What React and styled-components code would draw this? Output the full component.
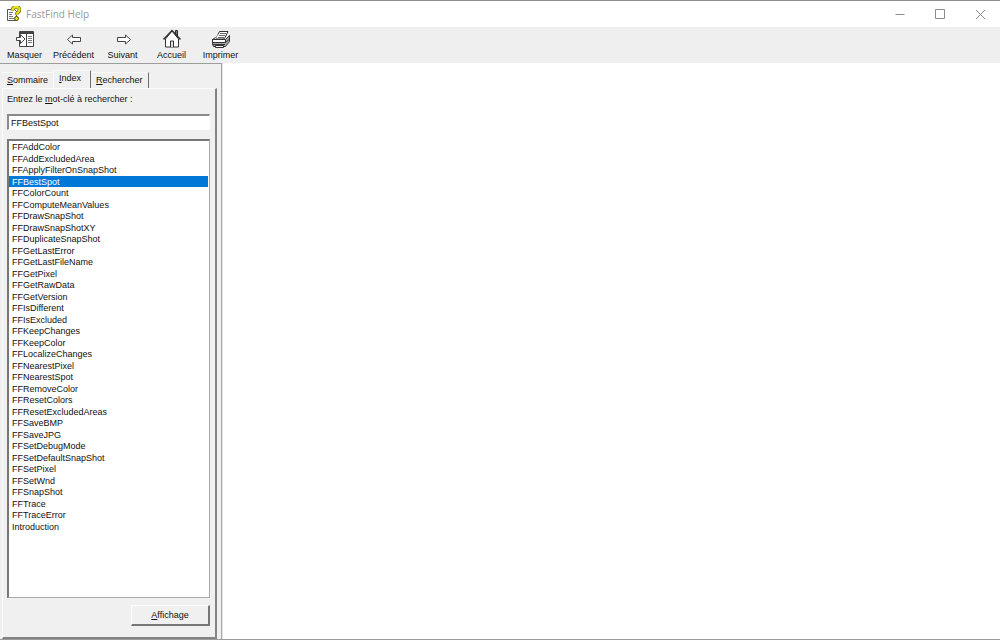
import React, { useState } from "react";
import styled, { createGlobalStyle, css } from "styled-components";

const GlobalStyle = createGlobalStyle`
  *, *::before, *::after { box-sizing: border-box; }
  body { margin: 0; background: #fff; }
  button, input { font: inherit; color: inherit; }
`;

const Window = styled.div`
  display: flex;
  flex-direction: column;
  height: 100vh;
  border-top: 1px solid #8f8f8f;
  border-bottom: 1px solid #9b9b9b;
  background: #fff;
  color: #111;
  font: 9px/12px "Liberation Sans", Arial, sans-serif;
`;

const TitleBar = styled.header`
  display: flex;
  align-items: center;
  height: 26px;
  padding-left: 6px;
`;

const Title = styled.h1`
  flex: 1;
  margin: 0 0 0 5px;
  color: #999;
  font: 400 10px/14px "Open Sans", "Noto Sans", sans-serif;
`;

const WindowButton = styled.button`
  display: grid;
  place-items: center;
  width: 40px;
  height: 26px;
  padding: 0;
  border: 0;
  background: none;
  color: #8c8c8c;
`;

const Toolbar = styled.nav`
  display: flex;
  height: 36px;
  background: #efefef;
`;

const ToolButton = styled.button`
  display: flex;
  flex-direction: column;
  align-items: center;
  gap: 1px;
  width: 49px;
  height: 36px;
  padding: 2px 0 0;
  border: 0;
  background: none;
  white-space: nowrap;
`;

const Body = styled.div`
  display: flex;
  flex: 1;
  min-height: 0;
`;

const Sidebar = styled.aside`
  display: flex;
  flex-direction: column;
  width: 222px;
  padding: 6px 4px 0 2px;
  border-top: 1px solid #9d9d9d;
  border-right: 1px solid #a5a5a5;
  background: #f0f0f0;
`;

const Content = styled.main`
  flex: 1;
  border-left: 1px solid #e6e6e6;
  background: #fff;
`;

const Tabs = styled.div`
  display: flex;
  align-items: flex-end;
  height: 18px;
`;

const Tab = styled.button`
  height: 16px;
  padding: 0 5px;
  border: 0;
  border-top: 1px solid #fafafa;
  background: none;
  line-height: 15px;
  white-space: nowrap;
  ${(p) => p.$edge && css`border-right: 1px solid #6f6f6f;`}
  ${(p) =>
    p.$active &&
    css`
      height: 18px;
      padding: 0 9px 2px 5px;
      border-right: 1px solid #6f6f6f;
      border-left: 1px solid #fafafa;
    `}
`;

const Panel = styled.section`
  display: flex;
  flex: 1;
  flex-direction: column;
  min-height: 0;
  padding: 4px 5px 11px 4px;
  border: 1px solid #fbfbfb;
  border-right: 2px solid #848484;
  border-bottom: 2px solid #848484;
`;

const Label = styled.label`
  margin-bottom: 9px;
  white-space: nowrap;
`;

const Keyword = styled.input`
  width: 100%;
  height: 16px;
  margin-bottom: 9px;
  padding: 0 2px;
  border: 1px solid #fff;
  border-top: 2px solid #8a8a8a;
  border-left: 2px solid #8a8a8a;
  border-radius: 0;
  outline: 0;
  background: #fff;
`;

const ListBox = styled.div`
  flex: 1;
  min-height: 0;
  margin-bottom: 7px;
  overflow: hidden;
  border: 1px solid #aaa;
  border-top: 2px solid #777;
  border-left: 2px solid #777;
  background: #fff;
`;

const Topics = styled.ul`
  display: grid;
  grid-template-rows: repeat(34, 1fr);
  height: 391px;
  margin: 0;
  padding: 0 1px 0 0;
  list-style: none;
`;

const Topic = styled.li`
  min-height: 0;
  padding: 1px 0 0 3px;
  line-height: 11px;
  white-space: nowrap;
  cursor: default;
  ${(p) => p.$selected && css`background: #0078d7; color: #fff;`}
`;

const ShowButton = styled.button`
  align-self: flex-end;
  width: 79px;
  height: 21px;
  padding: 0;
  border: 1px solid #fff;
  border-right: 2px solid #777;
  border-bottom: 2px solid #777;
  background: #f0f0f0;
`;

const topics = [
  "FFAddColor", "FFAddExcludedArea", "FFApplyFilterOnSnapShot", "FFBestSpot",
  "FFColorCount", "FFComputeMeanValues", "FFDrawSnapShot", "FFDrawSnapShotXY",
  "FFDuplicateSnapShot", "FFGetLastError", "FFGetLastFileName", "FFGetPixel",
  "FFGetRawData", "FFGetVersion", "FFIsDifferent", "FFIsExcluded",
  "FFKeepChanges", "FFKeepColor", "FFLocalizeChanges", "FFNearestPixel",
  "FFNearestSpot", "FFRemoveColor", "FFResetColors", "FFResetExcludedAreas",
  "FFSaveBMP", "FFSaveJPG", "FFSetDebugMode", "FFSetDefaultSnapShot",
  "FFSetPixel", "FFSetWnd", "FFSnapShot", "FFTrace", "FFTraceError",
  "Introduction",
];

const HelpLogo = () => (
  <svg width="15" height="16" viewBox="0 0 15 16" aria-hidden="true">
    <path d="M1.5 3.5h7l2 2v9h-9z" fill="#fff" stroke="#555" />
    <path d="M3 6.5h4M3 8.5h3M3 10.5h4M3 12.5h5" stroke="#777" />
    <path d="M6.5 4.5c0-4.500 7-4.500 7-.6 0 2.5-3 2.5-3 4.8" fill="none" stroke="#5d5908" strokeWidth="3.600" />
    <path d="M6.5 4.5c0-4.500 7-4.500 7-.6 0 2.5-3 2.5-3 4.8" fill="none" stroke="#e8e21a" strokeWidth="2.400" />
    <circle cx="10.5" cy="12.5" r="2" fill="#e8e21a" stroke="#4d4900" />
  </svg>
);

const HideIcon = () => (
  <svg width="20" height="19" viewBox="0 0 20 19" aria-hidden="true">
    <path d="M4.500 2.500h14v15h-14z" fill="#fff" stroke="#444" />
    <path d="M4 4h15" stroke="#444" strokeWidth="2" />
    <path d="M11.500 5v12" stroke="#444" />
    <path d="M13 7.500h4M13 9.500h4M13 11.500h4M13 13.500h4" stroke="#777" />
    <path d="M1.500 8.500h4v-3l4.500 4.500-4.500 4.500v-3h-4z" fill="#fff" stroke="#444" />
  </svg>
);

const BackIcon = () => (
  <svg width="20" height="19" viewBox="0 0 20 19" aria-hidden="true">
    <path d="M3.500 10.500l5-4.500v2.500h8v4h-8v2.500z" fill="#fff" stroke="#444" />
  </svg>
);

const ForwardIcon = () => (
  <svg width="20" height="19" viewBox="0 0 20 19" aria-hidden="true">
    <path d="M17.500 10.500l-5-4.500v2.500h-8v4h8v2.500z" fill="#fff" stroke="#444" />
  </svg>
);

const HomeIcon = () => (
  <svg width="20" height="19" viewBox="0 0 20 19" aria-hidden="true">
    <path d="M13.500 7V1.500h2V9" fill="#777" stroke="#333" />
    <path d="M3.500 10v8h13v-8L10 2z" fill="#fff" stroke="#333" />
    <path d="M1.500 10.500L10 1.500l8.500 9" fill="none" stroke="#333" strokeWidth="1.400" />
    <path d="M8.500 18v-6h3v6" fill="#ddd" stroke="#333" />
  </svg>
);

const PrintIcon = () => (
  <svg width="20" height="19" viewBox="0 0 20 19" aria-hidden="true">
    <path d="M5 9.500l3.500-7h8.500l-3.500 7z" fill="#fff" stroke="#333" />
    <path d="M1.500 10.500l3-2M14.500 10.500l4-4v6l-4 5h-12l-1-2v-5z" fill="#aaa" stroke="#333" />
    <path d="M5 9.500l2-4h7.500l-2 4z" fill="#fff" />
    <path d="M9 4.500h6M8 6.500h6M7 8.500h6" stroke="#666" />
    <path d="M1.500 10.500h13v3h-13z" fill="#fff" stroke="#333" />
    <path d="M14.500 13.500l4-3.500M2 15.500h12" stroke="#333" />
    <path d="M4.500 16.500h8v2h-8z" fill="#fff" stroke="#333" />
  </svg>
);

const tools = [
  ["Masquer", HideIcon], ["Précédent", BackIcon], ["Suivant", ForwardIcon],
  ["Accueil", HomeIcon], ["Imprimer", PrintIcon],
];

const windowControls = [
  ["Réduire", "M0.500 5.500h9"],
  ["Agrandir", "M0.500 0.500h9v9h-9z"],
  ["Fermer", "M1 1l9 9M10 1l-9 9"],
];

export default function App() {
  const [keyword, setKeyword] = useState("FFBestSpot");
  return (
    <Window>
      <GlobalStyle />
      <TitleBar>
        <HelpLogo />
        <Title>FastFind Help</Title>
        {windowControls.map(([name, d]) => (
          <WindowButton key={name} aria-label={name}>
            <svg width="11" height="11" viewBox="0 0 11 11" aria-hidden="true">
              <path d={d} fill="none" stroke="currentColor" />
            </svg>
          </WindowButton>
        ))}
      </TitleBar>
      <Toolbar>
        {tools.map(([name, Icon]) => (
          <ToolButton key={name}><Icon />{name}</ToolButton>
        ))}
      </Toolbar>
      <Body>
        <Sidebar>
          <Tabs role="tablist">
            <Tab role="tab" aria-selected="false"><u>S</u>ommaire</Tab>
            <Tab role="tab" aria-selected="true" $active><u>I</u>ndex</Tab>
            <Tab role="tab" aria-selected="false" $edge><u>R</u>echercher</Tab>
          </Tabs>
          <Panel>
            <Label htmlFor="keyword">Entrez le <u>m</u>ot-clé à rechercher :</Label>
            <Keyword id="keyword" value={keyword} onChange={(e) => setKeyword(e.target.value)} />
            <ListBox>
              <Topics role="listbox" aria-label="Index">
                {topics.map((topic) => (
                  <Topic
                    key={topic}
                    role="option"
                    aria-selected={topic === keyword}
                    $selected={topic === keyword}
                    onClick={() => setKeyword(topic)}
                  >
                    {topic}
                  </Topic>
                ))}
              </Topics>
            </ListBox>
            <ShowButton><u>A</u>ffichage</ShowButton>
          </Panel>
        </Sidebar>
        <Content />
      </Body>
    </Window>
  );
}
